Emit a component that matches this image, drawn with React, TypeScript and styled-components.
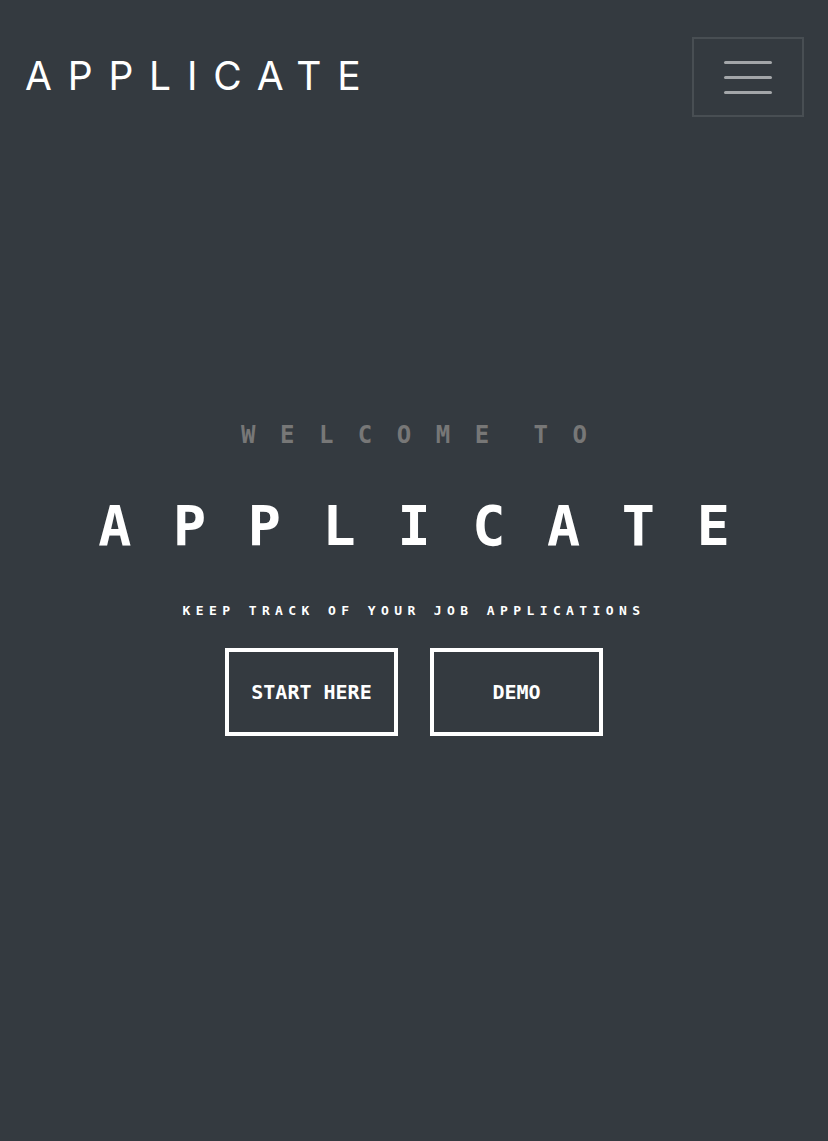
import styled, { createGlobalStyle } from "styled-components"

const GlobalStyle = createGlobalStyle`
  html, body {
    margin: 0;
    padding: 0;
    background-color: #343a40;
  }
  * {
    box-sizing: border-box;
  }
`

const Page = styled.div`
  min-height: 100vh;
  display: flex;
  flex-direction: column;
  background-color: #343a40;
  color: white;
`

const Navbar = styled.nav`
  display: flex;
  align-items: center;
  justify-content: space-between;
  padding: 37px 24px 0 25px;
`

const Brand = styled.a`
  font-family: Inter, "Liberation Sans", sans-serif;
  font-weight: 400;
  font-size: 39px;
  letter-spacing: 15.8px;
  color: white;
  text-decoration: none;
  line-height: 1;
  margin-top: -4px;
`

const Toggler = styled.button`
  width: 112px;
  height: 80px;
  border: 2px solid rgba(255, 255, 255, 0.1);
  background: transparent;
  display: flex;
  flex-direction: column;
  align-items: center;
  justify-content: center;
  gap: 12px;
  padding: 0;
  cursor: pointer;
`

const TogglerLine = styled.span`
  display: block;
  width: 48px;
  height: 3px;
  border-radius: 2px;
  background-color: rgba(255, 255, 255, 0.55);
`

const Hero = styled.main`
  flex: 1;
  display: flex;
  flex-direction: column;
  align-items: center;
  justify-content: center;
  padding-bottom: 100px;
  font-family: "DejaVu Sans Mono", "Liberation Mono", monospace;
  font-weight: bold;
`

const Welcome = styled.h3`
  margin: 0;
  font-size: 24px;
  line-height: 1;
  letter-spacing: 24.5px;
  word-spacing: -19px;
  color: #777;
  padding-left: 24.5px;
`

const Title = styled.h1`
  margin: 52px 0 0;
  font-size: 55px;
  line-height: 1;
  letter-spacing: 41.7px;
  padding-left: 41.7px;
  color: white;
`

const Subtitle = styled.p`
  margin: 50px 0 0;
  font-size: 13px;
  line-height: 1;
  letter-spacing: 5.4px;
  color: white;
`

const Buttons = styled.div`
  display: flex;
  gap: 32px;
  margin-top: 31px;
`

const OutlineButton = styled.button`
  width: 173px;
  height: 88px;
  border: 4px solid white;
  background: transparent;
  color: white;
  font-family: "DejaVu Sans Mono", "Liberation Mono", monospace;
  font-weight: bold;
  font-size: 20px;
  display: flex;
  align-items: center;
  justify-content: center;
  cursor: pointer;
`

export default function App() {
  return (
    <Page>
      <GlobalStyle />
      <Navbar>
        <Brand href="#">APPLICATE</Brand>
        <Toggler aria-label="Toggle navigation">
          <TogglerLine />
          <TogglerLine />
          <TogglerLine />
        </Toggler>
      </Navbar>
      <Hero>
        <Welcome>WELCOME TO</Welcome>
        <Title>APPLICATE</Title>
        <Subtitle>KEEP TRACK OF YOUR JOB APPLICATIONS</Subtitle>
        <Buttons>
          <OutlineButton>START HERE</OutlineButton>
          <OutlineButton>DEMO</OutlineButton>
        </Buttons>
      </Hero>
    </Page>
  )
}
